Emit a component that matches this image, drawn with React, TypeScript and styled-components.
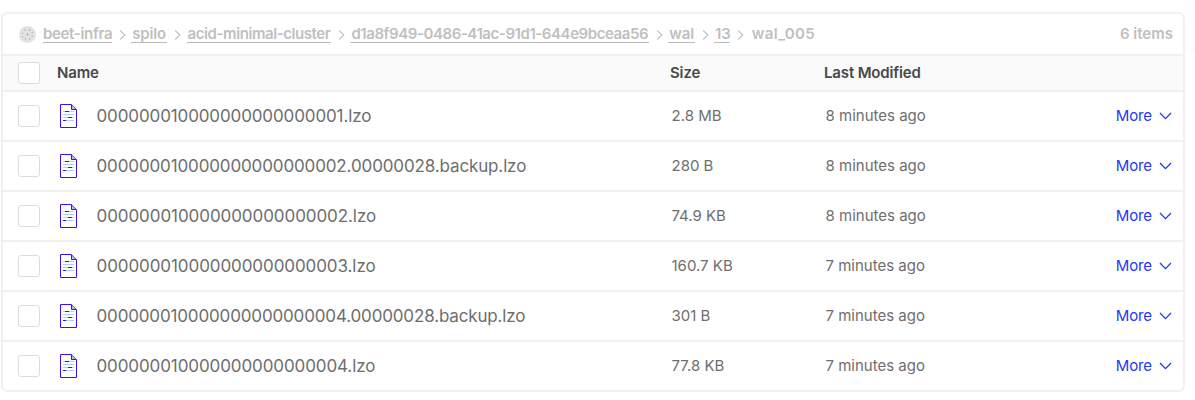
import React from 'react';
import styled, { createGlobalStyle } from 'styled-components';

const GlobalStyle = createGlobalStyle`
  * { box-sizing: border-box; }
  body {
    margin: 0;
    font-family: Inter, "Liberation Sans", sans-serif;
    font-size: 15px;
    color: #6e6e6e;
    background: linear-gradient(#fdfdfd, #fdfdfd) top right / 10px 54px no-repeat #fff;
  }
`;

const line = '2px solid #f0f0f0';

const Page = styled.main`
  padding: 12px 10px 0 1px;
`;

const Browser = styled.section`
  border: ${line};
  border-radius: 6px;
  overflow: hidden;
  background: #fff;
`;

const PathBar = styled.nav`
  display: flex;
  align-items: center;
  height: 40px;
  padding: 0 10px 0 16px;
  font-weight: 600;
  color: #c0c0c0;
`;

const BucketIcon = styled.svg`
  flex: none;
  width: 17px;
  height: 17px;
  margin-right: 7px;
`;

const Crumb = styled.a<{ $width: number; $track: number; $indent?: number }>`
  flex: none;
  width: ${p => p.$width}px;
  height: 17px;
  padding-left: ${p => p.$indent ?? 1}px;
  margin-top: 1px;
  line-height: 16px;
  letter-spacing: ${p => p.$track}px;
  white-space: nowrap;
  border-bottom: 1px solid #bcbcbc;
`;

const Current = styled.span`
  padding-left: 2px;
  line-height: 16px;
  letter-spacing: 0.35px;
`;

const Separator = styled.svg`
  flex: none;
  width: 19.3px;
  height: 12px;
  margin-top: 1px;
`;

const ItemCount = styled.span`
  margin-left: auto;
  line-height: 16px;
`;

const columns = '40px 38px 576px 154px 1fr auto';

const HeaderRow = styled.div`
  display: grid;
  grid-template-columns: ${columns};
  align-items: center;
  height: 38px;
  padding: 0 12px 0 15px;
  border-top: ${line};
  border-bottom: ${line};
  background: #fafafa;
  font-weight: 600;
  letter-spacing: -0.15px;
  line-height: 18px;
  color: #484848;
`;

const NameHeading = styled.span`
  grid-column: 2 / 4;
  margin-left: -1px;
`;

const SizeHeading = styled.span`
  margin-left: -2px;
`;

const FileRow = styled.div`
  display: grid;
  grid-template-columns: ${columns};
  align-items: center;
  height: 50px;
  padding: 0 11px 0 15px;
  border-bottom: ${line};
  line-height: 18px;
  &:last-child {
    height: 48px;
    border-bottom: 0;
  }
`;

const Checkbox = styled.span`
  width: 22px;
  height: 22px;
  border: 1px solid #dcdcdc;
  border-radius: 3px;
  background: #fff;
`;

const FileIcon = styled.svg`
  width: 17px;
  height: 24px;
  margin-left: 2px;
`;

const FileName = styled.span<{ $track: number }>`
  padding-left: 0.5px;
  font-size: 17px;
  line-height: 20px;
  letter-spacing: ${p => p.$track}px;
`;

const Cell = styled.span`
  margin-left: -0.5px;
`;

const MoreButton = styled.button`
  display: flex;
  align-items: center;
  gap: 7px;
  padding: 0;
  border: 0;
  background: none;
  font: inherit;
  line-height: 18px;
  letter-spacing: -0.1px;
  color: #2438f5;
`;

const Chevron = styled.svg`
  width: 13px;
  height: 8px;
`;

const crumbs = [
  { label: 'beet-infra', width: 69, track: -0.33, indent: 0 },
  { label: 'spilo', width: 36, track: -0.2 },
  { label: 'acid-minimal-cluster', width: 144.5, track: -0.43 },
  { label: 'd1a8f949-0486-41ac-91d1-644e9bceaa56', width: 298.5, track: -0.43 },
  { label: 'wal', width: 26.5, track: 0 },
  { label: '13', width: 16.5, track: 0 },
];

const files = [
  { name: '000000010000000000000001.lzo', size: '2.8 MB', modified: '8 minutes ago', track: -0.12 },
  { name: '000000010000000000000002.00000028.backup.lzo', size: '280 B', modified: '8 minutes ago', track: -0.13 },
  { name: '000000010000000000000002.lzo', size: '74.9 KB', modified: '8 minutes ago', track: -0.07 },
  { name: '000000010000000000000003.lzo', size: '160.7 KB', modified: '7 minutes ago', track: -0.08 },
  { name: '000000010000000000000004.00000028.backup.lzo', size: '301 B', modified: '7 minutes ago', track: -0.15 },
  { name: '000000010000000000000004.lzo', size: '77.8 KB', modified: '7 minutes ago', track: -0.1 },
];

const Bucket = () => (
  <BucketIcon viewBox="0 0 17 17">
    <circle cx="8.5" cy="8.5" r="8.5" fill="#e2e2e2" />
    <g fill="#a8a8a8">
      <path d="M8 7h1v1h1v1H9v1H8V9H7V8h1z" fill="#bcbcbc" />
      <circle cx="6" cy="4" r=".7" />
      <circle cx="10.8" cy="4" r=".7" />
      <circle cx="3.6" cy="7" r=".6" />
      <circle cx="13.2" cy="6.4" r=".6" />
      <circle cx="3.8" cy="10.6" r=".6" />
      <circle cx="13.2" cy="10.4" r=".7" />
      <circle cx="6.3" cy="13" r=".7" />
      <circle cx="10.6" cy="13" r=".7" />
    </g>
  </BucketIcon>
);

const Document = () => (
  <FileIcon viewBox="0 0 17 24" fill="none">
    <path d="M11 1v5h5z" fill="#a9cdfb" />
    <path d="M11.2.5H.5v23h16V5.8z M11.5.5v5h5" stroke="#3410ff" />
    <path d="M3 7.5h11M3 10.5h11M3 13.5h11M3 16.5h11" stroke="#a9cdfb" />
    <path d="M5 7.5h4M8 13.5h4M3 16.5h3" stroke="#3410ff" />
  </FileIcon>
);

export default function App() {
  return (
    <>
      <GlobalStyle />
      <Page>
        <Browser>
          <PathBar>
            <Bucket />
            {crumbs.map(c => (
              <React.Fragment key={c.label}>
                <Crumb $width={c.width} $track={c.track} $indent={c.indent}>{c.label}</Crumb>
                <Separator viewBox="0 0 19.3 12">
                  <path d="M8.2 1.5l4.6 4.5-4.6 4.5" fill="none" stroke="#c2c2c2" strokeWidth="1.1" />
                </Separator>
              </React.Fragment>
            ))}
            <Current>wal_005</Current>
            <ItemCount>6 items</ItemCount>
          </PathBar>
          <HeaderRow>
            <Checkbox />
            <NameHeading>Name</NameHeading>
            <SizeHeading>Size</SizeHeading>
            <SizeHeading>Last Modified</SizeHeading>
          </HeaderRow>
          {files.map(f => (
            <FileRow key={f.name}>
              <Checkbox />
              <Document />
              <FileName $track={f.track}>{f.name}</FileName>
              <Cell>{f.size}</Cell>
              <Cell>{f.modified}</Cell>
              <MoreButton>
                More
                <Chevron viewBox="0 0 13 8">
                  <path d="M1 1l5.5 5.6L12 1" fill="none" stroke="#2438f5" strokeWidth="1.3" />
                </Chevron>
              </MoreButton>
            </FileRow>
          ))}
        </Browser>
      </Page>
    </>
  );
}
